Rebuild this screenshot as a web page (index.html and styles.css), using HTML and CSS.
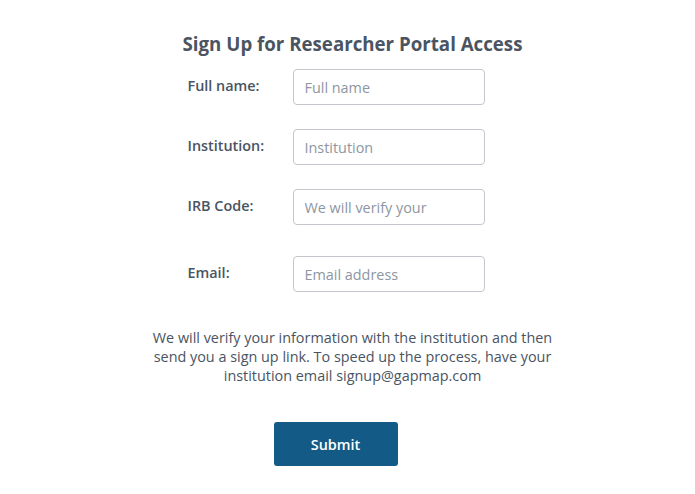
FILE: index.html
```html
<!DOCTYPE html>
<html lang="en">
<head>
    <meta charset="UTF-8">
    <meta name="viewport" content="width=device-width, initial-scale=1.0">
    <title>Sign Up for Researcher Portal Access</title>
    <link rel="stylesheet" href="styles.css">
</head>
<body>
    <div class="signup">
        <h2 class="title">Sign Up for Researcher Portal Access</h2>
        <form class="form" onsubmit="return false">
            <div class="row">
                <label for="fullName">Full name:</label>
                <input id="fullName" type="text" placeholder="Full name">
            </div>
            <div class="row">
                <label for="institution">Institution:</label>
                <input id="institution" type="text" placeholder="Institution">
            </div>
            <div class="row">
                <label for="irb">IRB Code:</label>
                <input id="irb" type="text" placeholder="We will verify your">
            </div>
            <div class="row row-email">
                <label for="email">Email:</label>
                <input id="email" type="email" placeholder="Email address">
            </div>
        </form>
        <p class="note">We will verify your information with the institution and then send you a sign up link. To speed up the process, have your institution email signup@gapmap.com</p>
        <button class="submit" type="button">Submit</button>
    </div>
</body>
</html>
```

FILE: styles.css
```css
body {
    margin: 0;
    font-family: "Open Sans", Arial, sans-serif;
    color: #4a5462;
    background-color: #fff;
}
.signup {
    display: flex;
    flex-direction: column;
    align-items: center;
    padding: 32px 0 0 10px;
}
.title {
    margin: 0 0 13px 0;
    font-size: 18.7px;
    font-weight: 700;
    line-height: 24px;
    color: #4a5462;
}
.form {
    display: flex;
    flex-direction: column;
    gap: 24px;
    margin-left: -33px;
}
.row {
    display: flex;
    align-items: flex-start;
}
.row-email {
    margin-top: 7px;
}
.row label {
    width: 105px;
    padding-top: 7px;
    font-size: 14.4px;
    font-weight: 600;
    line-height: 20px;
    color: #4a5462;
}
.row input {
    width: 192px;
    height: 36px;
    box-sizing: border-box;
    padding: 0 11px;
    border: 1px solid #c3c7cd;
    border-radius: 4px;
    font-family: "Open Sans", Arial, sans-serif;
    font-size: 14.4px;
    color: #4a5462;
}
.row input::placeholder {
    color: #8d96a2;
}
.note {
    width: 430px;
    margin: 36px 0 0 0;
    font-size: 14.4px;
    line-height: 19px;
    text-align: center;
    color: #4a5462;
}
.submit {
    width: 124px;
    height: 44px;
    margin: 37px 0 0 -34px;
    border: none;
    border-radius: 3px;
    background-color: #135b86;
    color: #fff;
    font-family: "Open Sans", Arial, sans-serif;
    font-size: 14.4px;
    font-weight: 600;
    cursor: pointer;
}
```
